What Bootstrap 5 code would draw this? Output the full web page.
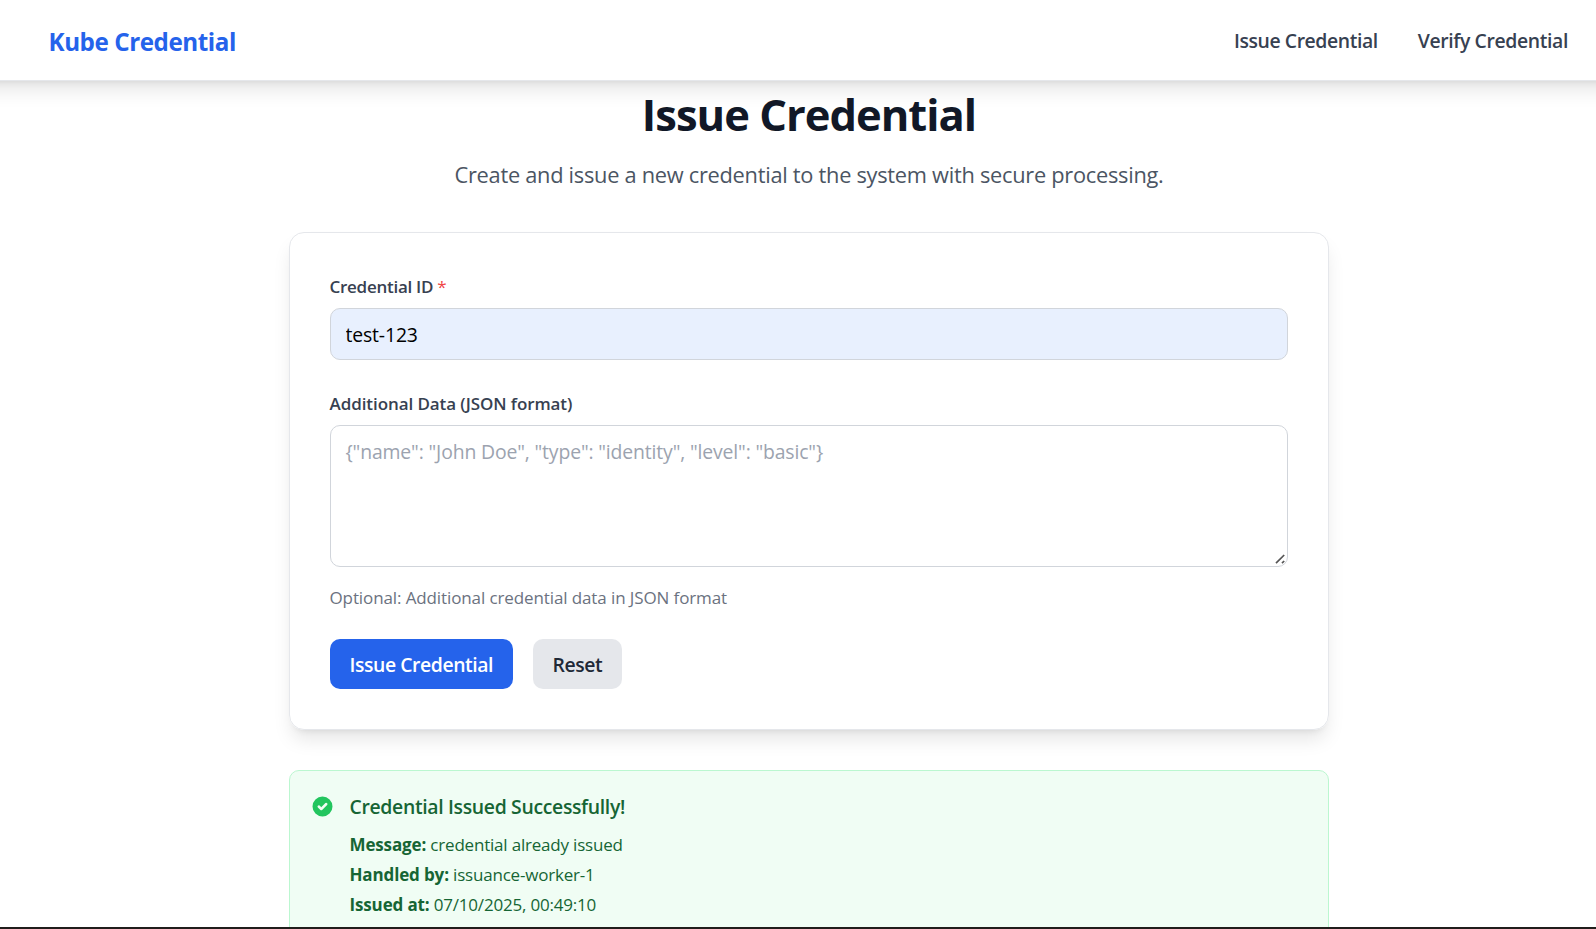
<!DOCTYPE html>
<html lang="en">
<head>
<meta charset="utf-8">
<meta name="viewport" content="width=device-width, initial-scale=1">
<title>Kube Credential</title>
<link href="https://cdn.jsdelivr.net/npm/bootstrap@5.3.0/dist/css/bootstrap.min.css" rel="stylesheet">
<script src="https://cdn.jsdelivr.net/npm/bootstrap@5.3.0/dist/js/bootstrap.bundle.min.js"></script>
<style>
  :root { --page-shadow: 0 12.5px 18.75px -3.75px rgba(0,0,0,.1), 0 5px 7.5px -5px rgba(0,0,0,.1); }
  body { font-family: "Open Sans", "Noto Sans", sans-serif; font-size: 19.4px; line-height: 30px; color: #111827; height: 929px; background: #fff; }
  .site-nav { height: 81px; margin: 0 -30px; padding: 2px 58px 0 78.5px; border-bottom: 1px solid #e5e7eb; box-shadow: var(--page-shadow); background: #fff; }
  .site-nav .navbar-brand { font-size: 24.2px; font-weight: 700; color: #2563eb; letter-spacing: -.43px; padding-top: 2px; }
  .nav-links { gap: 40px; }
  .nav-links .nav-link { color: #374151; font-weight: 600; letter-spacing: -.42px; }
  .nav-links .nav-link + .nav-link { letter-spacing: -.37px; }
  .page-column { width: 1040px; margin-left: 289px; }
  .page-head { padding-top: 9px; margin-bottom: 40px; }
  .page-head h1 { font-size: 43.5px; line-height: 50px; font-weight: 700; letter-spacing: -.98px; }
  .subtitle { font-size: 21.8px; line-height: 35px; color: #4b5563; letter-spacing: -.275px; margin-top: 17px; }
  .form-panel { border: 1px solid #e5e7eb; border-radius: 15px; padding: 40px; box-shadow: var(--page-shadow); margin-bottom: 40px; }
  .form-label { font-size: 17px; line-height: 25px; padding-top: 1px; font-weight: 600; color: #374151; letter-spacing: -.08px; margin: 0 0 9px -.5px; }
  .label-id { letter-spacing: -.27px; }
  .required { color: #ef4444; font-weight: 400; }
  .form-control { font-size: 19.4px; line-height: 30px; padding: 10px 14.5px; border: 1px solid #d1d5db; border-radius: 10px; color: #000; letter-spacing: -.15px; }
  .autofilled { background: #e8f0fe; height: 52px; margin-bottom: 30px; }
  textarea.form-control { height: 142px; padding-top: 11px; resize: none; }
  .grip { right: 2px; bottom: 2px; }
  .form-control::placeholder { color: #9ca3af; opacity: 1; }
  .hint { font-size: 17px; line-height: 25px; color: #6b7280; letter-spacing: -.11px; margin: 18px 0 29px -.5px; }
  .actions { gap: 20px; }
  .actions .btn { height: 50px; border: 0; border-radius: 10px; padding: 1px 20px 0 19.5px; font-size: 19.4px; line-height: 49px; font-weight: 600; letter-spacing: -.43px; }
  .btn-issue, .btn-issue:hover { background: #2563eb; color: #fff; }
  .btn-reset, .btn-reset:hover { background: #e5e7eb; color: #1f2937; }
  .result { background: #f0fdf4; border: 1px solid #bbf7d0; border-radius: 10px; padding: 21px 22px; color: #166534; }
  .result svg { margin-top: 4px; margin-right: 16.5px; }
  .result h2 { font-size: 19.4px; line-height: 30px; font-weight: 600; letter-spacing: -.33px; margin-bottom: 8px; }
  .result p { font-size: 17px; line-height: 30px; letter-spacing: -.2px; }
  .result strong { letter-spacing: -.14px; }
  .window-edge { height: 2px; background: #201d1b; }
</style>
</head>
<body class="d-flex flex-column overflow-hidden">
<nav class="site-nav d-flex align-items-center justify-content-between flex-shrink-0">
  <a class="navbar-brand m-0" href="#">Kube Credential</a>
  <div class="nav-links d-flex">
    <a class="nav-link p-0" href="#">Issue Credential</a>
    <a class="nav-link p-0" href="#">Verify Credential</a>
  </div>
</nav>
<main class="flex-grow-1 overflow-hidden">
  <div class="page-column">
    <header class="page-head text-center">
      <h1 class="mb-0">Issue Credential</h1>
      <p class="subtitle mb-0">Create and issue a new credential to the system with secure processing.</p>
    </header>
    <form class="form-panel">
      <label class="form-label label-id d-block" for="credentialId">Credential ID <span class="required">*</span></label>
      <input id="credentialId" class="form-control autofilled" value="test-123">
      <label class="form-label d-block" for="credentialData">Additional Data (JSON format)</label>
      <div class="position-relative">
        <textarea id="credentialData" class="form-control d-block" placeholder='{"name": "John Doe", "type": "identity", "level": "basic"}'></textarea>
        <svg class="grip position-absolute" width="11" height="11" viewBox="0 0 11 11" fill="none" stroke="#555" stroke-width="1.7" aria-hidden="true"><path d="M1 9.2L9.2 1M7 9.2L9.2 7"/></svg>
      </div>
      <p class="hint">Optional: Additional credential data in JSON format</p>
      <div class="actions d-flex">
        <button type="button" class="btn btn-issue">Issue Credential</button>
        <button type="button" class="btn btn-reset">Reset</button>
      </div>
    </form>
    <section class="result d-flex align-items-start">
      <svg class="flex-shrink-0" width="21" height="21" viewBox="1.6 1.6 16.8 16.8" aria-hidden="true"><path fill="#22c55e" fill-rule="evenodd" d="M10 18a8 8 0 100-16 8 8 0 000 16zm3.707-9.293a1 1 0 00-1.414-1.414L9 10.586 7.707 9.293a1 1 0 00-1.414 1.414l2 2a1 1 0 001.414 0l4-4z"/></svg>
      <div>
        <h2>Credential Issued Successfully!</h2>
        <p class="mb-0"><strong>Message:</strong> credential already issued</p>
        <p class="mb-0"><strong>Handled by:</strong> issuance-worker-1</p>
        <p class="mb-0"><strong>Issued at:</strong> 07/10/2025, 00:49:10</p>
      </div>
    </section>
  </div>
</main>
<div class="window-edge flex-shrink-0"></div>
</body>
</html>
